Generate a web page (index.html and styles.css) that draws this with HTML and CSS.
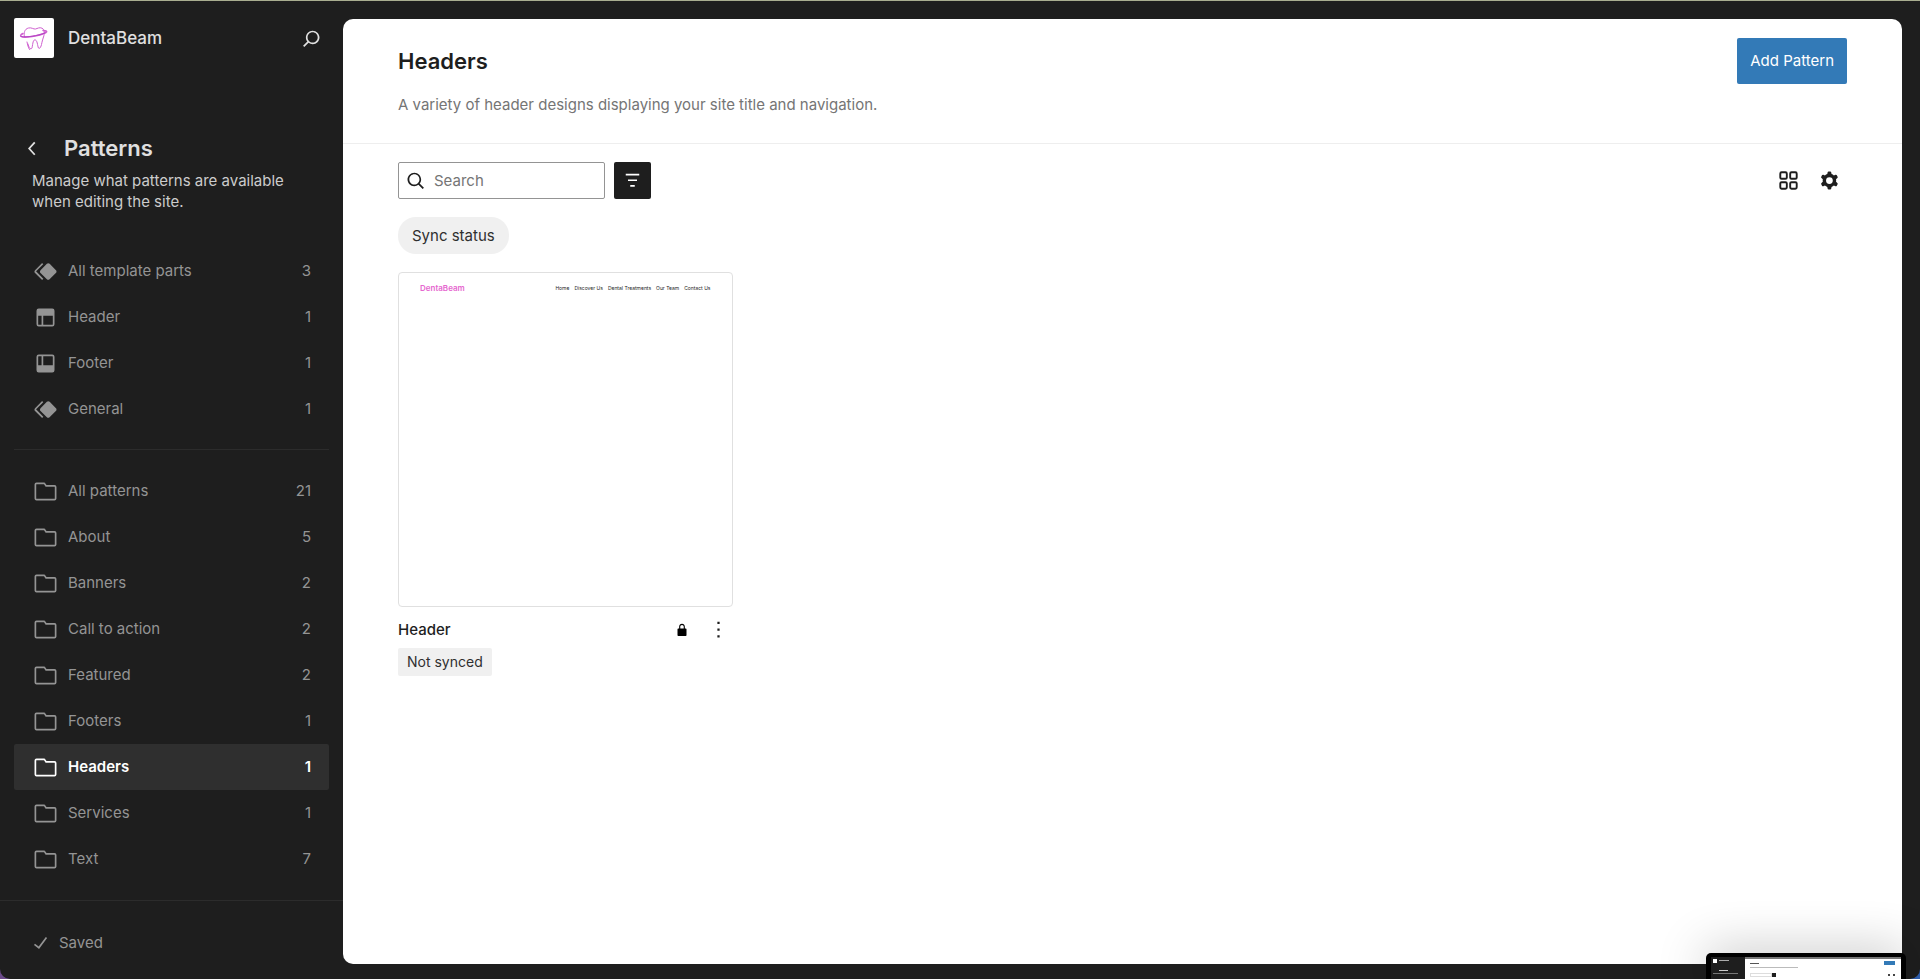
FILE: index.html
```html
<!DOCTYPE html>
<html lang="en">
<head>
  <meta charset="UTF-8">
  <meta name="viewport" content="width=device-width, initial-scale=1.0">
  <title>Patterns - DentaBeam</title>

  <link rel="stylesheet" href="styles.css">
</head>

<body>

<!-- Shared icons -->
<svg class="sprite" aria-hidden="true">
  <symbol id="icon-symbol" viewBox="0 0 24 24">
    <path d="M21.3 10.8l-5.6-5.6c-.7-.7-1.8-.7-2.5 0l-5.6 5.6c-.7.7-.7 1.8 0 2.5l5.6 5.6c.3.3.8.5 1.2.5s.9-.2 1.2-.5l5.6-5.6c.8-.7.8-1.9.1-2.5zm-17.6 1L10 5.500l-1-1-6.300 6.300c-.7.7-.7 1.800 0 2.500L9 19.500l1.100-1.100-6.300-6.300c-.2 0-.2-.2-.1-.3z"/>
  </symbol>
  <symbol id="icon-header" viewBox="0 0 24 24">
    <path d="M18.5 10.500H10v8h8a.5.5 0 0 0 .5-.5v-7.500zm-10 0h-3V18a.5.5 0 0 0 .5.5h2.500v-8zM6 4h12a2 2 0 0 1 2 2v12a2 2 0 0 1-2 2H6a2 2 0 0 1-2-2V6a2 2 0 0 1 2-2z" fill-rule="evenodd"/>
  </symbol>
  <symbol id="icon-footer" viewBox="0 0 24 24">
    <path d="M18 5.500H10v8h8.500V6a.5.5 0 0 0-.5-.5zm-9.500 8h-3V6a.5.5 0 0 1 .5-.5h2.500v8zM6 4h12a2 2 0 0 1 2 2v12a2 2 0 0 1-2 2H6a2 2 0 0 1-2-2V6a2 2 0 0 1 2-2z" fill-rule="evenodd"/>
  </symbol>
  <symbol id="icon-folder" viewBox="0 0 24 24">
    <path d="M4 19.200h16a1 1 0 0 0 1-1V8a1 1 0 0 0-1-1h-7.500l-1-1.600a1 1 0 0 0-.9-.6H4a1 1 0 0 0-1 1V18.200a1 1 0 0 0 1 1z" fill="none" stroke="currentColor" stroke-width="1.500"/>
  </symbol>
  <symbol id="icon-search" viewBox="0 0 24 24">
    <path d="M13 5c-3.300 0-6 2.700-6 6 0 1.400.5 2.700 1.300 3.700l-3.800 3.800 1.100 1.100 3.800-3.800c1 .8 2.300 1.300 3.700 1.300 3.300 0 6-2.700 6-6S16.300 5 13 5zm0 10.500c-2.500 0-4.500-2-4.500-4.500s2-4.500 4.500-4.500 4.500 2 4.500 4.500-2 4.500-4.500 4.500z"/>
  </symbol>
</svg>

<div class="site-editor">
  <aside class="sidebar">
    <div class="site-hub">
      <a class="site-icon" href="#" aria-label="View dashboard">
        <svg viewBox="0 0 40 40" fill="none" stroke="#cf5fd0" stroke-linecap="round">
          <path d="M10.500 19c-1-4 0-8 4-9 3-.8 5 1.400 7 1 2-.5 4-2 6.500-.8 3 1.500 2.500 5.800 1.500 8.800-1 3-1.500 5-2 7.500-.4 2-1.500 4-2.500 4-1.500-.5-1.200-7.500-3.500-8.500-2.500-.8-2.500 3-3.500 8-1.500 2.500-3.500-1-4-4"/>
          <path d="M13 24c.7 3 1 5 2.500 7.500"/>
          <path d="M9 15.500c-2 1-3 2-2 3 3 2 18-.5 25-4 1.500-1 .5-2-3-2" stroke-width="1.500"/>
          <path d="M7 18.500c6 1 16-.5 24-3.500" stroke="#b445c4"/>
        </svg>
      </a>
      <a class="site-title" href="#">DentaBeam</a>
      <button class="icon-button" aria-label="Open command palette">
        <svg class="icon"><use href="#icon-search"/></svg>
      </button>
    </div>

    <div class="sidebar-content">
      <div class="sidebar-heading">
        <button class="icon-button" aria-label="Back">
          <svg class="icon" viewBox="0 0 24 24"><path d="M14.600 7l-1.200-1L8 12l5.400 6 1.200-1-4.600-5z"/></svg>
        </button>
        <h1>Patterns</h1>
      </div>
      <p class="sidebar-description">Manage what patterns are available when editing the site.</p>

      <nav aria-label="Patterns">
        <ul class="nav-list">
          <li><a href="#"><svg class="icon"><use href="#icon-symbol"/></svg><span>All template parts</span><span>3</span></a></li>
          <li><a href="#"><svg class="icon"><use href="#icon-header"/></svg><span>Header</span><span>1</span></a></li>
          <li><a href="#"><svg class="icon"><use href="#icon-footer"/></svg><span>Footer</span><span>1</span></a></li>
          <li><a href="#"><svg class="icon"><use href="#icon-symbol"/></svg><span>General</span><span>1</span></a></li>
        </ul>
        <ul class="nav-list">
          <li><a href="#"><svg class="icon"><use href="#icon-folder"/></svg><span>All patterns</span><span>21</span></a></li>
          <li><a href="#"><svg class="icon"><use href="#icon-folder"/></svg><span>About</span><span>5</span></a></li>
          <li><a href="#"><svg class="icon"><use href="#icon-folder"/></svg><span>Banners</span><span>2</span></a></li>
          <li><a href="#"><svg class="icon"><use href="#icon-folder"/></svg><span>Call to action</span><span>2</span></a></li>
          <li><a href="#"><svg class="icon"><use href="#icon-folder"/></svg><span>Featured</span><span>2</span></a></li>
          <li><a href="#"><svg class="icon"><use href="#icon-folder"/></svg><span>Footers</span><span>1</span></a></li>
          <li><a class="active" href="#" aria-current="page"><svg class="icon"><use href="#icon-folder"/></svg><span>Headers</span><span>1</span></a></li>
          <li><a href="#"><svg class="icon"><use href="#icon-folder"/></svg><span>Services</span><span>1</span></a></li>
          <li><a href="#"><svg class="icon"><use href="#icon-folder"/></svg><span>Text</span><span>7</span></a></li>
        </ul>
      </nav>
    </div>

    <div class="save-hub">
      <button class="saved-button" disabled>
        <svg class="icon" viewBox="0 0 24 24"><path d="M16.700 7.100l-6.300 8.500-3.300-2.500-.9 1.200 4.500 3.400L17.900 8z"/></svg>
        Saved
      </button>
    </div>
  </aside>

  <main class="page">
    <header class="page-header">
      <div class="page-title">
        <h2>Headers</h2>
        <button class="add-button">Add Pattern</button>
      </div>
      <p>A variety of header designs displaying your site title and navigation.</p>
    </header>

    <div class="toolbar">
      <div class="search-box">
        <svg class="icon flip"><use href="#icon-search"/></svg>
        <input type="search" aria-label="Search" placeholder="Search">
      </div>
      <button class="filter-button" aria-label="Toggle filter display">
        <svg class="icon" viewBox="0 0 24 24"><path d="M10 17.500h4V16h-4v1.500zM6 6v1.500h12V6H6zm2 6.500h8V11H8v1.500z"/></svg>
      </button>
      <div class="view-actions">
        <button class="icon-button" aria-label="Layout">
          <svg class="icon" viewBox="0 0 24 24" fill="none" stroke="currentColor" stroke-width="1.700">
            <g fill="none">
              <rect x="4.700" y="4.700" width="5.800" height="5.800" rx="1.200"/>
              <rect x="13.500" y="4.700" width="5.800" height="5.800" rx="1.200"/>
              <rect x="4.700" y="13.500" width="5.800" height="5.800" rx="1.200"/>
              <rect x="13.500" y="13.500" width="5.800" height="5.800" rx="1.200"/>
            </g>
          </svg>
        </button>
        <button class="icon-button" aria-label="View options">
          <svg class="icon" viewBox="0 0 24 24"><path fill-rule="evenodd" d="M10.289 4.836A1 1 0 0 1 11.275 4h1.306a1 1 0 0 1 .987.836l.244 1.466c.787.260 1.503.679 2.108 1.218l1.393-.522a1 1 0 0 1 1.216.437l.653 1.130a1 1 0 0 1-.23 1.273l-1.148.944a6.025 6.025 0 0 1 0 2.435l1.149.946a1 1 0 0 1 .23 1.272l-.653 1.130a1 1 0 0 1-1.216.437l-1.394-.522c-.605.540-1.320.958-2.108 1.218l-.244 1.466a1 1 0 0 1-.987.836h-1.306a1 1 0 0 1-.986-.836l-.244-1.466a5.995 5.995 0 0 1-2.108-1.218l-1.394.522a1 1 0 0 1-1.217-.436l-.653-1.131a1 1 0 0 1 .23-1.272l1.149-.946a6.026 6.026 0 0 1 0-2.435l-1.148-.944a1 1 0 0 1-.23-1.272l.653-1.131a1 1 0 0 1 1.217-.437l1.393.522a5.994 5.994 0 0 1 2.108-1.218l.244-1.466zM14.929 12a3 3 0 1 1-6 0 3 3 0 0 1 6 0z"/></svg>
        </button>
      </div>
    </div>

    <div class="filters">
      <button class="chip">Sync status</button>
    </div>

    <div class="pattern-grid">
      <article class="pattern">
        <div class="preview">
          <strong>DentaBeam</strong>
          <span>Home</span>
          <span>Discover Us</span>
          <span>Dental Treatments</span>
          <span>Our Team</span>
          <span>Contact Us</span>
        </div>
        <div class="pattern-title">
          <h3>Header</h3>
          <svg class="icon" viewBox="0 0 24 24" aria-label="Locked"><path d="M17 10h-1.200V7.500c0-2.100-1.700-3.800-3.800-3.800S8.200 5.400 8.200 7.500V10H7c-.6 0-1 .4-1 1v8c0 .6.4 1 1 1h10c.6 0 1-.4 1-1v-8c0-.6-.4-1-1-1zm-2.700 0H9.700V7.500c0-1.300 1-2.300 2.300-2.300s2.300 1 2.300 2.300V10z"/></svg>
          <button class="icon-button" aria-label="Actions">
            <svg class="icon" viewBox="0 0 24 24"><path d="M13 19h-2v-2h2v2zm0-6h-2v-2h2v2zm0-6h-2V5h2v2z"/></svg>
          </button>
        </div>
        <span class="badge">Not synced</span>
      </article>
    </div>
  </main>
</div>

<!-- Floating window preview -->
<div class="floating-preview" aria-hidden="true">
  <div class="mini-sidebar">
    <i class="mini-logo"></i>
    <i class="mini-name"></i>
    <i class="mini-heading"></i>
    <i class="mini-line"></i>
  </div>
  <div class="mini-page">
    <div class="mini-row"><i class="mini-title"></i><i class="mini-button"></i></div>
    <i class="mini-text"></i>
    <div class="mini-row"><i class="mini-search"></i><i class="mini-filter"></i><i class="mini-tools"></i></div>
  </div>
</div>

</body>
</html>
```

FILE: styles.css
```css
* {
  box-sizing: border-box;
}

body {
  margin: 0;
  background: linear-gradient(90deg, #6b4a8a, #2f5fb0);
  color: #1e1e1e;
  font-family: Inter, "Liberation Sans", sans-serif;
  font-size: 15px;
  line-height: 20px;
  overflow: hidden;
}

h1, h2, h3, p, ul {
  margin: 0;
  padding: 0;
}

button, input {
  font: inherit;
  color: inherit;
}

a {
  color: inherit;
  text-decoration: none;
}

.sprite {
  display: none;
}

.icon {
  display: block;
  flex: none;
  width: 27px;
  height: 27px;
  fill: currentColor;
}

.flip {
  transform: scaleX(-1);
}

.icon-button {
  display: flex;
  align-items: center;
  justify-content: center;
  width: 36px;
  height: 36px;
  padding: 0;
  border: none;
  background: none;
  cursor: pointer;
}

.site-editor {
  display: grid;
  grid-template-columns: 343px 1fr;
  min-height: 100vh;
  background-color: #1e1e1e;
  border-top: 1px solid #a9ae90;
  border-radius: 0 0 10px 10px;
}

/* Sidebar */
.sidebar {
  display: flex;
  flex-direction: column;
  color: #e0e0e0;
}

.site-hub {
  display: flex;
  align-items: center;
  padding: 17px 14px 0;
}

.site-icon {
  width: 40px;
  height: 40px;
  background-color: #fff;
  border-radius: 2px;
}

.site-icon svg {
  display: block;
}

.site-title {
  flex: 1;
  margin-left: 14px;
  font-size: 17px;
  font-weight: 500;
}

.sidebar-content {
  flex: 1;
  padding: 72px 14px 0;
}

.sidebar-heading {
  display: flex;
  align-items: center;
  gap: 14px;
}

.sidebar-heading h1 {
  font-size: 22px;
  font-weight: 600;
  line-height: 28px;
}

.sidebar-description {
  padding: 4px 32px 0 18px;
  margin-bottom: 36px;
  line-height: 21px;
  color: #ccc;
}

.nav-list {
  list-style: none;
  color: #949494;
}

.nav-list + .nav-list {
  margin-top: 17px;
  padding-top: 18px;
  border-top: 1px solid #2c2c2c;
}

.nav-list a {
  display: flex;
  align-items: center;
  gap: 9px;
  height: 46px;
  padding: 0 18px;
  border-radius: 2px;
}

.nav-list span:last-child {
  margin-left: auto;
}

.nav-list a.active {
  background-color: #2f2f2f;
  color: #fff;
  font-weight: 600;
}

.save-hub {
  padding: 26px 27px 21px;
  border-top: 1px solid #2c2c2c;
}

.saved-button {
  display: flex;
  align-items: center;
  gap: 5px;
  padding: 2px 0;
  border: none;
  background: none;
  color: #949494;
}

/* Page */
.page {
  margin: 18px 18px 15px 0;
  background-color: #fff;
  border-radius: 10px;
}

.page-header {
  padding: 19px 55px 28px;
  border-bottom: 1px solid #eee;
}

.page-title {
  display: flex;
  align-items: center;
  justify-content: space-between;
}

.page-title h2 {
  font-size: 22px;
  font-weight: 600;
}

.page-header p {
  margin-top: 11px;
  color: #757575;
}

.add-button {
  height: 46px;
  padding: 0 13px;
  background-color: #337ab7;
  color: #fff;
  border: none;
  border-radius: 2px;
  cursor: pointer;
}

.toolbar {
  display: flex;
  gap: 9px;
  padding: 18px 55px;
}

.search-box {
  display: flex;
  align-items: center;
  gap: 5px;
  width: 207px;
  height: 37px;
  padding-left: 3px;
  border: 1px solid #949494;
  border-radius: 2px;
}

.search-box input {
  flex: 1;
  min-width: 0;
  padding: 0;
  border: none;
  outline: none;
  background: none;
}

.search-box input::placeholder {
  color: #757575;
}

.filter-button {
  display: flex;
  align-items: center;
  justify-content: center;
  width: 37px;
  height: 37px;
  padding: 0;
  background-color: #1e1e1e;
  color: #fff;
  border: none;
  border-radius: 2px;
  cursor: pointer;
}

.view-actions {
  display: flex;
  gap: 5px;
  margin-left: auto;
}

.filters {
  padding: 0 55px;
}

.chip {
  height: 37px;
  padding: 0 14px;
  background-color: #f0f0f0;
  border: none;
  border-radius: 18px;
  color: #2f2f2f;
}

.pattern-grid {
  display: grid;
  grid-template-columns: repeat(4, 1fr);
  gap: 37px;
  padding: 18px 55px;
}

.preview {
  display: flex;
  gap: 5px;
  aspect-ratio: 1;
  padding: 10px 21px;
  border: 1px solid #e0e0e0;
  border-radius: 4px;
  font-size: 5px;
  line-height: 10px;
}

.preview strong {
  flex: 1;
  color: #e667cf;
  font-size: 8px;
  font-weight: 600;
}

.pattern-title {
  display: flex;
  align-items: center;
  margin-top: 5px;
}

.pattern-title h3 {
  flex: 1;
  font-size: 15px;
  font-weight: 500;
}

.pattern-title > .icon {
  width: 18px;
  height: 18px;
  margin-right: 10px;
  color: #000;
}

.pattern-title .icon-button {
  margin-right: -4px;
}

.badge {
  display: inline-block;
  padding: 4px 9px;
  background-color: #f0f0f0;
  border-radius: 2px;
  color: #2f2f2f;
  font-size: 14px;
}

/* Floating window preview */
.floating-preview {
  position: absolute;
  right: 14px;
  bottom: 0;
  display: flex;
  width: 200px;
  height: 26px;
  padding: 4px 5px 0;
  background-color: #000;
  border-radius: 5px 5px 0 0;
  box-shadow: 0 0 50px rgba(0, 0, 0, 0.3);
}

.floating-preview i {
  display: block;
}

.mini-sidebar {
  display: grid;
  grid-template-columns: 4px 1fr;
  align-content: start;
  gap: 2px;
  width: 34px;
  padding: 2px;
  background-color: #1e1e1e;
}

.mini-logo {
  height: 4px;
  background-color: #fff;
}

.mini-name {
  width: 10px;
  height: 1px;
  margin-top: 1px;
  background-color: #aaa;
}

.mini-heading {
  grid-column: 2;
  width: 9px;
  height: 1px;
  margin-top: 5px;
  background-color: #ccc;
}

.mini-line {
  grid-column: 1 / 3;
  width: 25px;
  height: 1px;
  background-color: #777;
}

.mini-page {
  flex: 1;
  padding: 2px 6px 0 5px;
  background-color: #fff;
  border-top: 2px solid #777;
}

.mini-row {
  display: flex;
  align-items: center;
}

.mini-title {
  width: 9px;
  height: 1px;
  background-color: #555;
}

.mini-button {
  width: 11px;
  height: 4px;
  margin-left: auto;
  background-color: #337ab7;
}

.mini-text {
  width: 48px;
  height: 1px;
  margin: 2px 0 5px;
  background-color: #bbb;
}

.mini-search {
  width: 22px;
  height: 4px;
  border: 1px solid #ddd;
}

.mini-filter {
  width: 4px;
  height: 4px;
  background-color: #1e1e1e;
}

.mini-tools {
  width: 7px;
  height: 2px;
  margin-left: auto;
  border: solid #444;
  border-width: 0 2px;
}
```
